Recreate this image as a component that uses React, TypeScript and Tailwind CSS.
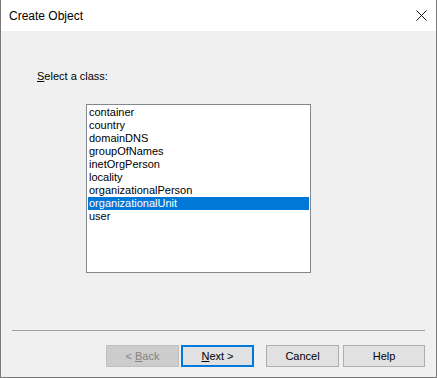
import React from "react";

const classes = [
  "container",
  "country",
  "domainDNS",
  "groupOfNames",
  "inetOrgPerson",
  "locality",
  "organizationalPerson",
  "organizationalUnit",
  "user",
];

const App: React.FC = () => {
  const selected = "organizationalUnit";

  return (
    <div
      className="w-[437px] h-[378px] flex flex-col border-x border-b border-[#7a7a7a] bg-[#f0f0f0] overflow-hidden"
      style={{ fontFamily: '"Liberation Sans", Arial, sans-serif' }}
    >
      {/* Title bar */}
      <div className="h-[31px] bg-white flex items-center justify-between pl-[8px] pr-[9px]">
        <span className="text-[12px] leading-[14px] text-black">Create Object</span>
        <svg width="11" height="11" viewBox="0 0 11 11" className="mt-[-1px]">
          <path d="M0.5 0.5 L10.5 10.5 M10.5 0.5 L0.5 10.5" stroke="#111" strokeWidth="1" fill="none" />
        </svg>
      </div>

      {/* Body */}
      <div className="flex-1 flex flex-col">
        <div className="mt-[39px] pl-[36px] text-[11px] leading-[13px] text-black">
          <span className="underline">S</span>elect a class:
        </div>

        <div className="mt-[21px] ml-[85px] w-[225px] h-[169px] border border-[#828790] bg-white p-[1px]">
          {classes.map((c) => (
            <div
              key={c}
              className={
                c === selected
                  ? "h-[13px] leading-[13px] text-[11px] pl-[1px] bg-[#0078d7] text-white"
                  : "h-[13px] leading-[13px] text-[11px] pl-[1px] text-black"
              }
            >
              {c}
            </div>
          ))}
        </div>

        {/* Separator */}
        <div className="mt-[57px] mx-[11px] h-px bg-[#a0a0a0]" />

        {/* Buttons */}
        <div className="mt-[14px] flex pl-[105px] text-[11px]">
          <div className="w-[73px] h-[22px] flex items-center justify-center bg-[#cccccc] border border-[#bfbfbf] text-[#838383]">
            &lt; <span className="underline ml-[3px]">B</span>ack
          </div>
          <div className="ml-[2px] w-[73px] h-[22px] flex items-center justify-center bg-[#e1e1e1] border-2 border-[#0078d7] text-black">
            <span className="underline">N</span>ext &gt;
          </div>
          <div className="ml-[12px] w-[73px] h-[22px] flex items-center justify-center bg-[#e1e1e1] border border-[#adadad] text-black">
            Cancel
          </div>
          <div className="ml-[4px] w-[82px] h-[22px] flex items-center justify-center bg-[#e1e1e1] border border-[#adadad] text-black">
            Help
          </div>
        </div>
      </div>
    </div>
  );
};

export default App;
